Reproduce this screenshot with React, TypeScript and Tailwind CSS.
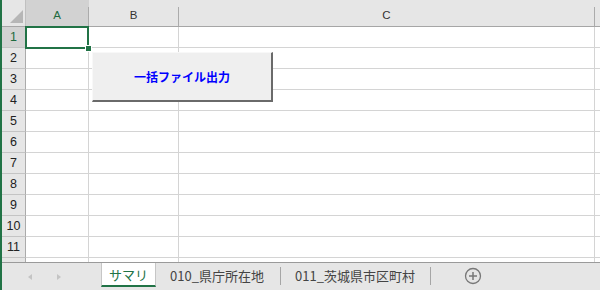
import React from "react";

const cols = [
  { label: "A", w: "w-[63px]", sel: true },
  { label: "B", w: "w-[90px]", sel: false },
  { label: "C", w: "w-[416px]", sel: false },
];

function HeaderCell({ label, w, sel }: { label: string; w: string; sel: boolean }) {
  return (
    <div className={`${w} flex h-full ${sel ? "bg-[#d2d2d2]" : ""}`}>
      <div
        className={`flex-1 flex items-center justify-center pt-[6px] text-[11.5px] ${
          sel ? "text-[#1e6b40]" : "text-[#333]"
        }`}
      >
        {label}
      </div>
      <div className="w-px mt-[7px] bg-[#ababab]" />
    </div>
  );
}

function Row({ n }: { n: number }) {
  const sel = n === 1;
  return (
    <div className="flex h-[21px]">
      <div
        className={`w-[24px] border-r border-b border-r-[#ababab] border-b-[#c4c4c4] flex items-center justify-center text-[12.5px] ${
          sel ? "bg-[#d2d2d2] text-[#1e6b40]" : "bg-[#e6e6e6] text-[#222]"
        }`}
      >
        {n}
      </div>
      <div className="w-[63px] border-r border-b border-[#d4d4d4]" />
      <div className="w-[90px] border-r border-b border-[#d4d4d4]" />
      <div className="w-[416px] border-r border-b border-[#d4d4d4]" />
      <div className="flex-1 border-b border-[#d4d4d4]" />
    </div>
  );
}

export default function App() {
  const rows = Array.from({ length: 11 }, (_, i) => i + 1);
  return (
    <div className="w-[600px] h-[290px] flex bg-white overflow-hidden font-['Liberation_Sans','Noto_Sans_CJK_JP',sans-serif]">
      <div className="w-[2px] bg-[#217346]" />
      <div className="w-[598px] flex flex-col relative">
        {/* column header */}
        <div className="h-[27px] flex bg-[#e6e6e6] border-b border-[#a6a6a6]">
          <div className="w-[24px] h-full border-r border-[#c0c0c0] relative">
            <svg width="24" height="26" className="block">
              <polygon points="21,10 21,23 8,23" fill="#b6b6b6" />
            </svg>
          </div>
          {cols.map((c) => (
            <HeaderCell key={c.label} {...c} />
          ))}
          <div className="flex-1" />
        </div>
        {rows.map((n) => (
          <Row key={n} n={n} />
        ))}
        <div className="flex flex-1">
          <div className="w-[24px] bg-[#e6e6e6] border-r border-[#ababab]" />
          <div className="w-[63px] border-r border-[#d4d4d4]" />
          <div className="w-[90px] border-r border-[#d4d4d4]" />
          <div className="w-[416px] border-r border-[#d4d4d4]" />
          <div className="flex-1" />
        </div>
        {/* sheet tabs */}
        <div className="h-[28px] bg-[#e6e6e6] border-t border-[#9a9a9a] flex items-start font-['Noto_Sans_CJK_JP',sans-serif] text-[13px] text-[#444]">
          <div className="w-[99px] h-[26px] flex items-center">
            <svg width="99" height="26" className="block">
              <polygon points="30,11 30,17 26,14" fill="#c4c4c4" />
              <polygon points="55,11 55,17 59,14" fill="#c4c4c4" />
            </svg>
          </div>
          <div className="w-[55px] h-[24px] bg-white border-l border-r border-[#c6c6c6] border-b-2 border-b-[#217346] flex items-center justify-center text-[#217346] leading-none">
            サマリ
          </div>
          <div className="w-[124px] h-[24px] flex items-center pl-[14px] leading-none">010_県庁所在地</div>
          <div className="w-px h-[18px] mt-[4px] bg-[#a6a6a6]" />
          <div className="w-[149px] h-[24px] flex items-center pl-[14px] leading-none">011_茨城県市区町村</div>
          <div className="w-px h-[18px] mt-[4px] bg-[#a6a6a6]" />
          <div className="ml-[33px] h-[26px] flex items-center">
            <svg width="18" height="18" viewBox="0 0 18 18" className="block">
              <circle cx="9" cy="9" r="7.5" fill="none" stroke="#777" strokeWidth="1.3" />
              <line x1="9" y1="5" x2="9" y2="13" stroke="#777" strokeWidth="1.5" />
              <line x1="5" y1="9" x2="13" y2="9" stroke="#777" strokeWidth="1.5" />
            </svg>
          </div>
        </div>

        {/* selection */}
        <div className="absolute left-[23px] top-[26px] w-[64px] h-[23px] border-2 border-[#217346]" />
        <div className="absolute left-[83px] top-[45px] w-[7px] h-[7px] bg-[#217346] border border-white" />

        {/* button */}
        <div className="absolute left-[90px] top-[52px] w-[181px] h-[50px] bg-[#efefef] border-t border-l border-t-[#f8f8f8] border-l-[#f8f8f8] border-r-2 border-b-2 border-r-[#6a6a6a] border-b-[#6a6a6a] flex items-center justify-center">
          <span className="font-['Noto_Sans_CJK_JP',sans-serif] font-bold text-[12px] text-[#0000ff] leading-none">
            一括ファイル出力
          </span>
        </div>
      </div>
    </div>
  );
}
